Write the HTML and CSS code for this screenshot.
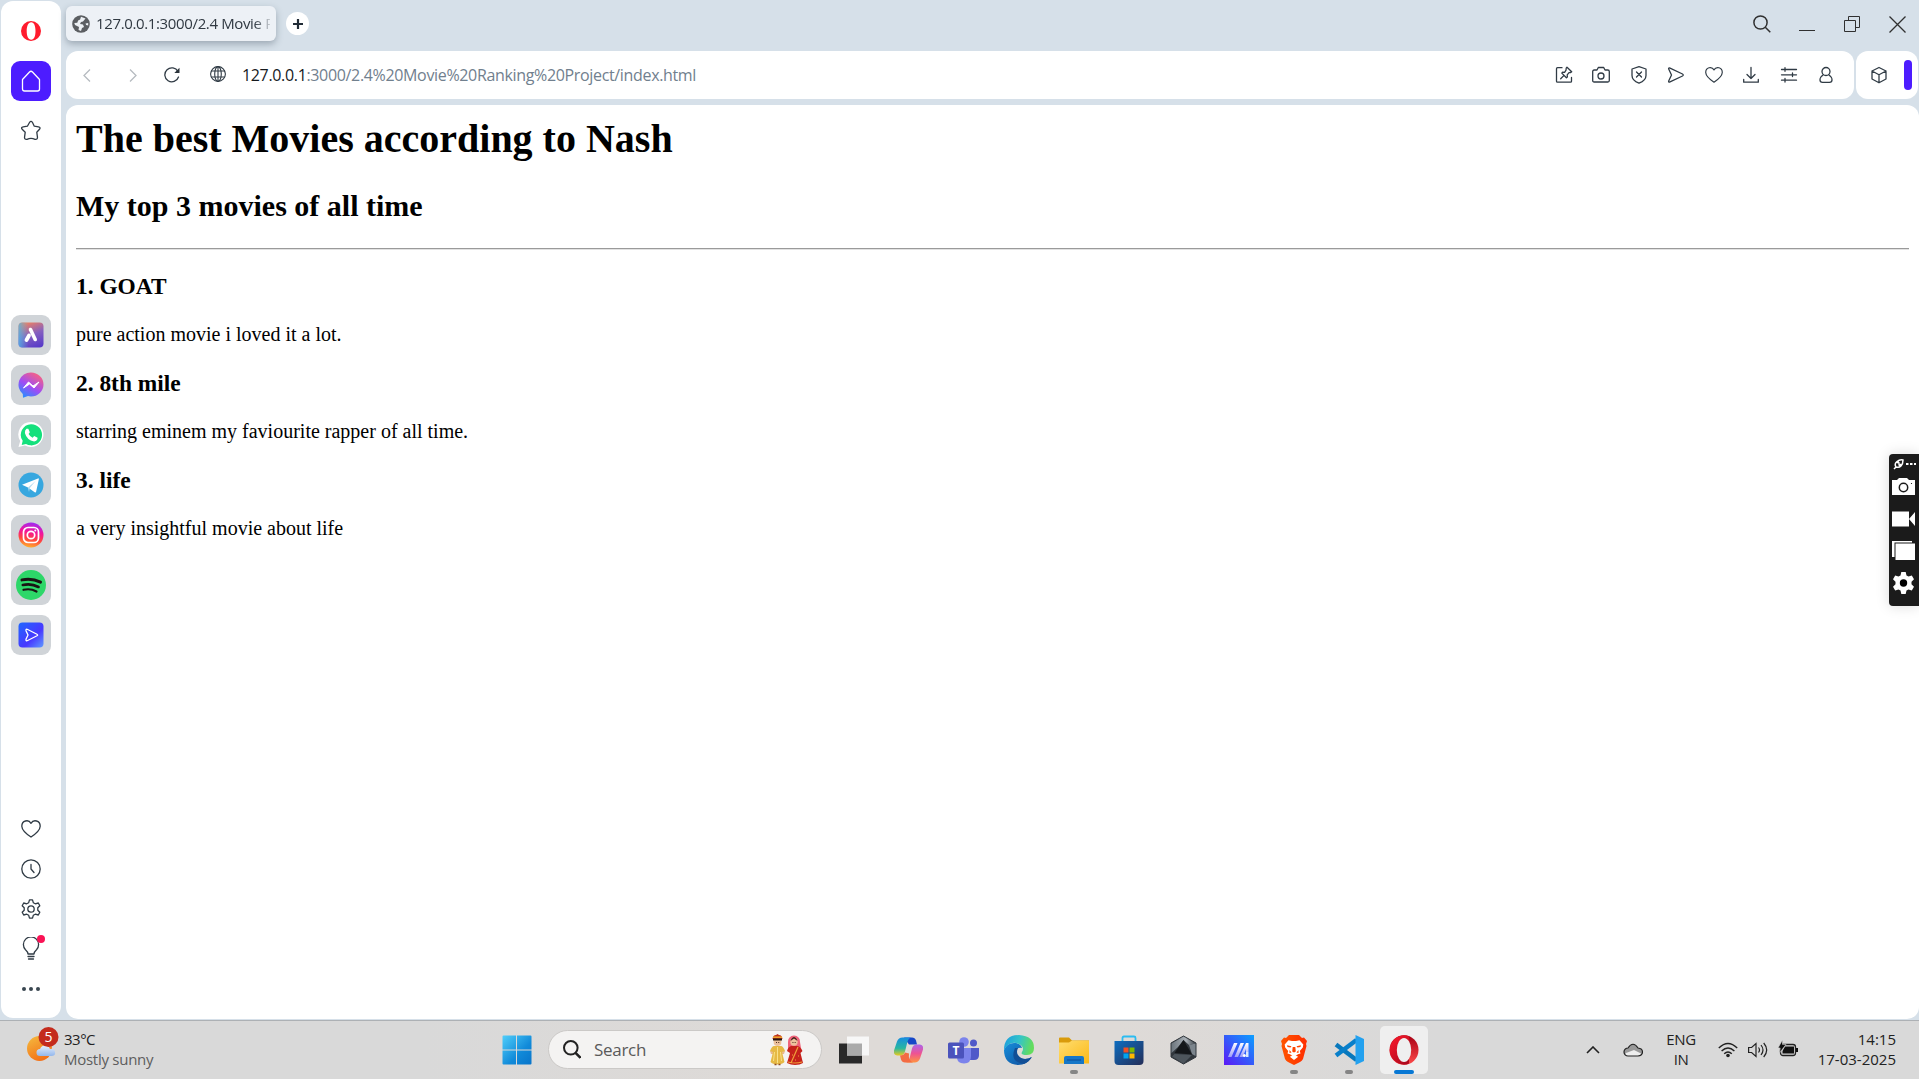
FILE: index.html
```html
<!DOCTYPE html>
<html lang="en">
<head>
<meta charset="utf-8">
<title>Movie Ranking Project</title>
<link rel="stylesheet" href="styles.css">
</head>
<body>
<div class="browser">
  <nav class="sidebar">
    <div class="slot"><svg width="20" height="20" viewBox="0 0 20 20"><path fill="#ff1b2d" fill-rule="evenodd" d="M10 0a10 10 0 1 0 0 20a10 10 0 0 0 0-20zM10.200 1.200c3 0 4.300 4 4.300 8.800s-1.300 8.800-4.300 8.800S5.700 14.800 5.700 10s1.500-8.800 4.500-8.800z"/></svg></div>
    <div class="slot home"><svg class="ln" width="20" height="22" viewBox="0 0 20 22"><path d="M1.500 9.500 8.500 2q1.500-1.500 3 0l7 7.500v9.500q0 2-2 2h-13q-2 0-2-2z"/></svg></div>
    <div class="slot"><svg class="ln" width="22" height="22" viewBox="0 0 22 22"><path d="M9.500 2.500q1.500-2.200 3 0l1.800 3.700 4.200.6q2.500.5 1 2.500l-2.700 3 .7 5q0 2.500-2.500 2-4-1.800-8 0-2.500.5-2.500-2l.7-5-3-3q-1.700-2 1-2.500l4.200-.6z"/></svg></div>
    <div class="apps">
      <div class="tile"><svg width="26" height="26" viewBox="0 0 26 26"><defs><linearGradient id="ar" x1=".3" y1="0" x2=".7" y2="1"><stop offset="0" stop-color="#f08060"/><stop offset=".5" stop-color="#8560c0"/><stop offset="1" stop-color="#5a3cc8"/></linearGradient><linearGradient id="ar2"><stop offset="0" stop-color="#4fb8e8" stop-opacity=".8"/><stop offset=".4" stop-color="#4fb8e8" stop-opacity="0"/></linearGradient></defs><rect x=".5" y=".5" width="25" height="25" rx="4" fill="url(#ar)"/><rect x=".5" y=".5" width="25" height="25" rx="4" fill="url(#ar2)"/><path d="M11 13.500 8.500 18" stroke="#fff" stroke-width="3.800" stroke-linecap="round"/><path d="m12.500 7.500 4.700 10" stroke="#fff" stroke-width="3.600" stroke-linecap="round"/></svg></div>
      <div class="tile"><svg width="26" height="26" viewBox="0 0 26 26"><defs><linearGradient id="ms" x1=".2" y1="1" x2=".8" y2="0"><stop offset="0" stop-color="#2390ff"/><stop offset=".45" stop-color="#a04cf5"/><stop offset="1" stop-color="#ff6378"/></linearGradient></defs><path fill="url(#ms)" d="M13 .5a12.500 12 0 0 1 0 24q-2 0-3-.4l-5 1.700-.2-3.800A12.200 12.200 0 0 1 13 .5z"/><path d="m5.500 16 5-6 4.500 4 6-4-5 6-4.500-4z" fill="#fff" stroke="#fff" stroke-linejoin="round"/></svg></div>
      <div class="tile"><svg width="26" height="26" viewBox="0 0 26 26"><path fill="#fff" d="M13 0a12.500 12.500 0 1 1-6 23.500L.5 25l1.700-6A12.500 12.500 0 0 1 13 0z"/><path fill="#14e07c" d="M13 2.200a10.600 10.600 0 1 1-5 19.700L3.700 22.900l1-4.100A10.600 10.600 0 0 1 13 2.200z"/><path fill="#fff" d="M8.500 6.800h1.800l1.500 3.400-1.200 1.900q1.300 2.500 4 3.600l1.600-1.700 3.400 1.700q0 3.400-3.500 3.700Q8.800 18.200 6.900 11q-.2-2.600 1.600-4.200z"/></svg></div>
      <div class="tile"><svg width="26" height="26" viewBox="0 0 26 26"><circle cx="13" cy="13" r="12.500" fill="#37a7df"/><path fill="#fff" d="m4 12.800 16-6.400q1-.2.8 1l-2.700 12.400q-.3 1-1.400.4L10 15.500z"/><path d="m10 15.500 7.800-6.700-6 7.200-.8 4z" fill="#b6dcef"/></svg></div>
      <div class="tile"><svg width="26" height="26" viewBox="0 0 26 26"><defs><linearGradient id="ig" x1=".3" y1="1" x2=".5" y2="0"><stop offset="0" stop-color="#ffb62b"/><stop offset=".35" stop-color="#ff453f"/><stop offset=".65" stop-color="#f3149c"/><stop offset="1" stop-color="#a02cf0"/></linearGradient></defs><circle cx="13" cy="13" r="12.500" fill="url(#ig)"/><g fill="none" stroke="#fff" stroke-width="1.700"><rect x="5.500" y="5.500" width="15" height="15" rx="4.500"/><circle cx="13" cy="13" r="3.700"/></g><circle cx="17.300" cy="8.600" r="1" fill="#fff"/></svg></div>
      <div class="tile"><svg width="30" height="30" viewBox="0 0 30 30"><circle cx="15" cy="15" r="15" fill="#2dd769"/><g fill="none" stroke="#191414" stroke-linecap="round"><path stroke-width="3" d="M6 9.900q10-2 18.500 2.200"/><path stroke-width="2.600" d="M6.800 15q8.500-2 15.700 2"/><path stroke-width="2.200" d="M7.500 19.800q7-1.700 13 1.700"/></g></svg></div>
      <div class="tile"><svg width="26" height="26" viewBox="0 0 26 26"><defs><linearGradient id="pl" x1="0" y1="0" x2="1" y2="1"><stop offset="0" stop-color="#2068ff"/><stop offset=".6" stop-color="#4838ff"/><stop offset="1" stop-color="#609cff"/></linearGradient></defs><rect x=".5" y=".5" width="25" height="25" rx="4" fill="url(#pl)"/><path d="M8 8.700q-.3-2 1.700-1.200l9.300 4.700q1.300.8 0 1.600l-9.300 4.700q-2 .8-1.700-1.200L10 13z" fill="none" stroke="#fff" stroke-width="1.300"/></svg></div>
    </div>
    <div class="tools">
      <div class="slot"><svg class="ln" width="20" height="18" viewBox="0 0 20 18"><path d="M10 17Q1 11 .8 6.200C.8.500 7.500-1 10 3.300 12.500-1 19.200.500 19.200 6.200 19 11 10 17 10 17z"/></svg></div>
      <div class="slot"><svg class="ln" width="20" height="20" viewBox="0 0 20 20"><circle cx="10" cy="10" r="9.200"/><path d="M10 5.500V10l3 3.500"/></svg></div>
      <div class="slot"><svg class="ln" width="20" height="20" viewBox="0 0 20 20"><circle cx="10" cy="10" r="3.200"/><path d="M8.500.8h3l.8 2.900 2 1.100 3-.8 1.500 2.700-2 2v2.600l2 2-1.500 2.700-3-.8-2 1.100-.8 2.900h-3l-.8-2.900-2-1.100-3 .8-1.500-2.700 2-2V8.700l-2-2L2.700 4l3 .8 2-1.100z"/></svg></div>
      <div class="slot badge"><svg class="ln" width="18" height="24" viewBox="0 0 18 24"><path d="M6 17q0-2-2.500-4.200a7.600 7.600 0 1 1 11 0Q12 15 12 17zM6 19.500h6M6.500 22h5"/></svg></div>
      <div class="slot"><svg width="20" height="6" viewBox="0 0 20 6"><g fill="#394650"><circle cx="3" cy="3" r="2"/><circle cx="10" cy="3" r="2"/><circle cx="17" cy="3" r="2"/></g></svg></div>
    </div>
  </nav>
  <main class="main">
    <header class="tabs">
      <div class="tab"><svg width="18" height="18" viewBox="0 0 18 18"><circle cx="9" cy="9" r="8.800" fill="#5b5e62"/><path fill="#edf1f5" d="m9 1.800 4.500 1.700-2.500 3-2 .5-1 2 3 .5 1 2.500-2 1-1 3-2.500-1 .5-3-4-2-.7-2 3-.3.800-2.200 2-1z M13.500 8.500l2.700-.5v2.500l-2-.5z"/></svg><span class="title">127.0.0.1:3000/2.4 Movie R</span></div>
      <div class="newtab"><svg width="10" height="10" viewBox="0 0 10 10"><path d="M5 0v10M0 5h10" stroke="#202a35" stroke-width="2.200"/></svg></div>
      <div class="controls">
        <svg width="18" height="18" viewBox="0 0 18 18"><circle cx="7.500" cy="7.500" r="6.600"/><path d="m12.300 12.300 5 5"/></svg>
        <svg width="16" height="16" viewBox="0 0 16 16"><path d="M0 14.500h16" stroke-width="1"/></svg>
        <svg width="16" height="16" viewBox="0 0 16 16"><path stroke-width="1" d="M.5 4.500h11v11H.5zM4.500 4.500v-4h11v11h-4"/></svg>
        <svg width="17" height="17" viewBox="0 0 17 17"><path d="m.5.500 16 16M16.500.500l-16 16" stroke-width="1.300"/></svg>
      </div>
    </header>
    <div class="bars">
      <div class="toolbar">
        <svg class="back" width="8" height="13" viewBox="0 0 8 13"><path d="m7 .5-6 6 6 6"/></svg>
        <svg class="fwd" width="8" height="13" viewBox="0 0 8 13"><path d="m1 .5 6 6-6 6"/></svg>
        <svg class="ln reload" width="16" height="16" viewBox="0 0 16 16"><path d="M14 4.500A7 7 0 1 0 14.500 10"/><path d="M15.500.8V6h-5.200z" fill="#2b333b" stroke="none"/></svg>
        <svg class="ln globe" width="16" height="16" viewBox="0 0 16 16"><circle cx="8" cy="8" r="7.400"/><ellipse cx="8" cy="8" rx="3.300" ry="7.400"/><path d="M8 .6v14.800M1.500 5h13M1.500 11h13"/></svg>
        <div class="url"><b>127.0.0.1</b>:3000/2.4%20Movie%20Ranking%20Project/index.html</div>
        <div class="actions">
          <svg class="ln" width="18" height="18" viewBox="0 0 18 18"><path d="M7 1.700H2.500Q1.500 1.700 1.500 2.700v12.500q0 1 1 1h13q1 0 1-1V11.500M12 1.200l4.700 4.500-1 .8-1.700.2-1.800 2.200.2 2-1 .8-4.600-4.600.8-1 2 .2L11 4.200l.2-2zM9 9.400l-3.300 3.300"/></svg>
          <svg class="ln" width="18" height="18" viewBox="0 0 18 18"><path d="M.7 5.500Q.7 4 2.200 4H5l1.300-2.500h5.400L13 4h2.800q1.500 0 1.500 1.500v9q0 1.500-1.500 1.500H2.200Q.7 16 .7 14.500z"/><circle cx="9" cy="10" r="3"/></svg>
          <svg class="ln" width="18" height="18" viewBox="0 0 18 18"><path d="m9 .7 7 2.300v6.500q0 5-7 7.700-7-2.700-7-7.700V3zM6.500 6l5 5M11.500 6l-5 5"/></svg>
          <svg class="ln" width="18" height="18" viewBox="0 0 18 18"><path d="M2.500 1.800 15.500 8q1.500 1 0 2L2.500 16.200q-1.200 0-.8-1.200L4.500 9 1.700 3q-.4-1.200.8-1.200z"/></svg>
          <svg class="ln" width="18" height="18" viewBox="0 0 20 18"><path d="M10 17Q1 11 .8 6.200C.8.500 7.500-1 10 3.300 12.500-1 19.200.500 19.200 6.200 19 11 10 17 10 17z"/></svg>
          <svg class="ln" width="18" height="18" viewBox="0 0 18 18"><path d="M9 1.500v11M5 8.500l4 4 4-4M1.700 13.500v2.700h14.600v-2.700"/></svg>
          <svg class="ln" width="18" height="18" viewBox="0 0 18 18"><path d="M1.500 3.500h15M1.500 8.800h15M1.500 14.200h15M5 1.700v3.600M12.500 7v3.600M5 12.400V16"/></svg>
          <svg class="ln" width="18" height="18" viewBox="0 0 18 18"><circle cx="9" cy="5.500" r="4"/><path d="M6 9Q3 11 3 14q0 2.300 2.500 2.300h7Q15 16.300 15 14q0-3-3-5"/></svg>
        </div>
      </div>
      <div class="panel">
        <svg class="ln" width="16" height="18" viewBox="0 0 16 18"><path d="m8 1.500 7 3.500v8L8 16.800 1 13V5zM1 5l7 3.700L15 5M8 8.700v8"/></svg>
        <span class="handle"></span>
      </div>
    </div>
    <article class="page">
      <h1>The best Movies according to Nash</h1>
      <h2>My top 3 movies of all time</h2>
      <hr>
      <h3>1. GOAT</h3>
      <p>pure action movie i loved it a lot.</p>
      <h3>2. 8th mile</h3>
      <p>starring eminem my faviourite rapper of all time.</p>
      <h3>3. life</h3>
      <p>a very insightful movie about life</p>
    </article>
  </main>
  <aside class="recorder">
    <svg width="30" height="152" viewBox="0 0 30 152"><g fill="#fff"><path d="M3 26h23v15H3zM3 57.500h17v15H3zM20 65l6-7v14z"/><path d="M3 26h5l2-2h8l2 2h6v3H3z"/></g><circle cx="14.500" cy="33.500" r="4.200" fill="#fff" stroke="#1b1b1b" stroke-width="1.500"/><circle cx="22.500" cy="29.500" r=".6"/><path fill="#fff" d="M3 87h20v1.500H5.500V103H3zM6.500 89.500H26V106H6.500z"/><g fill="none" stroke="#fff" stroke-width="1.500"><path d="M7 13q-2-3 1-5.500T14 6q0 4-2 6t-5 1zM5 15l2-2M8 9q2-2 2 1t2 0"/><path stroke-width="2" stroke-dasharray="2.500 1.500" d="M17 10h10"/></g><path fill="#fff" d="M12.300 118h4.400l.8 3.500 2 1 3.300-1 2.200 3.800-2.500 2.500v2.400l2.500 2.500-2.200 3.800-3.300-1-2 1-.8 3.500h-4.400l-.8-3.500-2-1-3.300 1L4 132.700l2.500-2.500v-2.400L4 125.300l2.200-3.800 3.300 1 2-1z"/><circle cx="14.500" cy="129" r="3.700"/></svg>
  </aside>
</div>
<footer class="taskbar">
  <div class="weather">
    <svg width="32" height="35" viewBox="0 0 32 35"><defs><linearGradient id="sun" x1=".2" y1="0" x2=".7" y2="1"><stop offset="0" stop-color="#f4b63c"/><stop offset="1" stop-color="#f36c16"/></linearGradient><linearGradient id="cl" x1="0" y1="0" x2="0" y2="1"><stop offset="0" stop-color="#e6f0fc"/><stop offset="1" stop-color="#93b7ec"/></linearGradient></defs><circle cx="12.500" cy="21.500" r="12.500" fill="url(#sun)"/><path fill="url(#cl)" d="M13 29a3.500 3.500 0 0 1 0-7q2-5 7-3 2 0 3 3 4-1 5 3t-4 4z"/><circle cx="21.500" cy="10" r="10" fill="#c42b1c"/><text x="21.500" y="15" class="num">5</text></svg>
    <div><div class="temp">33°C</div><div class="sky">Mostly sunny</div></div>
  </div>
  <div class="launch">
    <div class="app"><svg width="30" height="30" viewBox="0 0 30 30"><defs><linearGradient id="win" gradientUnits="userSpaceOnUse" x1="0" y1="0" x2="30" y2="30"><stop offset="0" stop-color="#52d0fb"/><stop offset=".6" stop-color="#118ad9"/><stop offset="1" stop-color="#0873c9"/></linearGradient></defs><path fill="url(#win)" d="M.5 1.500q0-1 1-1H14v14H.5zM15 .5h13.500q1 0 1 1v13H15zM.5 15.500H14v14H1.500q-1 0-1-1zM15 15.500h14.500v13q0 1-1 1H15z"/></svg></div>
    <div class="search">
      <svg width="18" height="19" viewBox="0 0 18 19"><g fill="none" stroke="#222" stroke-width="2"><circle cx="7.800" cy="7.800" r="6.800"/><path stroke-width="2.500" d="m12.500 12.800 5 5"/></g></svg>
      <span>Search</span>
      <svg width="34" height="32" viewBox="0 0 34 32"><path fill="#e9b993" d="M1 17h3v3H2zM13 17h3l-1 3h-2z"/><path fill="#e6b945" d="M5 12h7q2 0 4 5l-3 1-.5-2 3 12q-2 2-7 2.500-5-.5-7-2.500l3-12-.5 2-3-1q2-5 4-5z"/><path d="M8.500 13v16M5.500 18l-1 9M11.500 18l1 9" stroke="#f9e08a"/><path d="M5.500 30.500h2M9.500 30.500h2" stroke="#8d4a24" stroke-width="1.500"/><circle cx="8.500" cy="8" r="3.900" fill="#edc19c"/><path fill="#bd3220" d="M3.500 5Q4 1 7 1l1.500-1L10 1q3 0 3.500 4z"/><path stroke="#f1a02a" stroke-width="1.600" d="M4 3.200h9"/><path fill="#26180f" d="M4 4.500h9v2H4z"/><path d="M7 8.500h.9M9.300 8.500h.9" stroke="#3b2115"/><path fill="#ef647b" d="M19 16V8q0-6 6-6.500Q31 2 31 8l1.500 9-5 3-6-4z"/><circle cx="25" cy="8" r="3.700" fill="#edc19c"/><path fill="#43201a" d="M21.500 7q1-3.500 3.500-4 2.500.5 3.500 4L25 4.500z"/><path d="M23.500 8.500h.9M25.700 8.500h.9" stroke="#3b2115"/><path fill="#c5211b" d="M22 12h6q3 0 5.500 5l-2 2 2.500 10q-3 2-8 2-4 0-8-2l3-10-3-2q1-4 4-5z"/><path d="m29 13-7 16M19 28q7 2 14 0M23 21h1M29 22h1M26 26h1" fill="none" stroke="#f0a13a" stroke-width="1.200"/></svg>
    </div>
    <div class="app"><svg width="30" height="28" viewBox="0 0 30 28"><path fill="#292929" d="M0 7.500h23v20H0z"/><path fill="#f7f7f7" d="M8 .500h22v19H8z"/><path fill="#aaa" d="M8 7.500h15v12H8z"/></svg></div>
    <div class="app"><svg width="29" height="26" viewBox="0 0 29 26"><defs><linearGradient id="ca" x1="0" y1="0" x2="0" y2="1"><stop offset="0" stop-color="#168de0"/><stop offset=".6" stop-color="#28b7a0"/><stop offset="1" stop-color="#e9c91e"/></linearGradient><linearGradient id="cb" x1="0" y1="0" x2="0" y2="1"><stop offset="0" stop-color="#ad65ea"/><stop offset=".5" stop-color="#ee5393"/><stop offset="1" stop-color="#ff9340"/></linearGradient></defs><path fill="#1747c8" d="M10 .5h8q3 0 4 3l1 4h-8z"/><path fill="url(#ca)" d="M8.500.5H17q-3 1-4 6l-2 8q-1 4-5 4H3q-4-1-3-5l3-9q1.500-4 5.500-4z"/><path fill="url(#cb)" d="M20.500 25.500H12q3-1 4-6l2-8q1-4 5-4h3q4 1 3 5l-3 9q-1.500 4-5.500 4z"/><path fill="#f36b43" d="M19 25.500h-8q-3 0-4-3l-1-4q4 0 5-3l4 1q-1 7 4 9z"/></svg></div>
    <div class="app"><svg width="31" height="27" viewBox="0 0 31 27"><circle cx="16" cy="5" r="4.800" fill="#7b83eb"/><circle cx="25.500" cy="6" r="3.500" fill="#5059c9"/><path fill="#5059c9" d="M21 11h10v7q0 5-5 5h-5z"/><path fill="#7b83eb" d="M9 11h14v8q0 7.500-7 7.500T9 20z"/><rect y="5.500" width="16" height="16" rx="1.500" fill="#4b53bc"/><text x="8" y="18" class="tee">T</text></svg></div>
    <div class="app"><svg width="30" height="30" viewBox="0 0 30 30"><defs><linearGradient id="ea" x1="0" y1="0" x2="1" y2=".2"><stop offset="0" stop-color="#1a9be0"/><stop offset=".55" stop-color="#34c4c8"/><stop offset="1" stop-color="#63dc5e"/></linearGradient><linearGradient id="eb" x1="0" y1="0" x2="1" y2="1"><stop offset="0" stop-color="#168edb"/><stop offset="1" stop-color="#104d9b"/></linearGradient></defs><path fill="url(#eb)" d="M0 15Q3 7 12 8q5 1 6 5-5-1-6 3 0 8 9 8 4 0 6.500-2Q23 30 14 30 0 29 0 15z"/><path fill="#124f96" d="M11 13q-6 14 9 16 5-2 8-7-9 5-14-2-2-3 0-7z"/><path fill="url(#ea)" d="M0 15Q0 0 15 0q15 1 15 13 0 7-7 7-7 0-5-3 3-5-3-8-9-4-15 6z"/></svg></div>
    <div class="app run"><svg width="30" height="27" viewBox="0 0 30 27"><defs><linearGradient id="fo" x1="0" y1="0" x2="1" y2="1"><stop offset="0" stop-color="#ffdd70"/><stop offset="1" stop-color="#fbb916"/></linearGradient></defs><path fill="#d99b0b" d="M0 1.500Q0 .5 1 .5h9l3 3h17v7H0z"/><path fill="url(#fo)" d="M0 5.500h10l3-2h16q1 0 1 1v22H0z"/><path fill="#1677c8" d="M5 27v-6q0-2 2-2h16q2 0 2 2v6z"/><path stroke="#0b4d96" d="M8 23h14"/></svg></div>
    <div class="app"><svg width="30" height="30" viewBox="0 0 30 30"><defs><linearGradient id="st" x1="0" y1="0" x2="1" y2="1"><stop offset="0" stop-color="#0d6dc0"/><stop offset="1" stop-color="#252e58"/></linearGradient></defs><path d="M8.500 7V3q0-1.500 1.500-1.500h10q1.500 0 1.500 1.500v4" fill="none" stroke="#2bbcf1" stroke-width="1.800"/><path fill="url(#st)" d="M.5 6h29v20q0 4-4 4h-21q-4 0-4-4z"/><path fill="#f25022" d="M9.500 12.500h5v5h-5z"/><path fill="#7fba00" d="M15.500 12.500h5v5h-5z"/><path fill="#00a4ef" d="M9.500 18.500h5v5h-5z"/><path fill="#ffb900" d="M15.500 18.500h5v5h-5z"/></svg></div>
    <div class="app"><svg width="27" height="30" viewBox="0 0 27 30"><defs><linearGradient id="hx" x1="0" y1="0" x2="1" y2="0"><stop offset="0" stop-color="#6c757d"/><stop offset=".6" stop-color="#aab1b7"/><stop offset="1" stop-color="#3c434a"/></linearGradient></defs><path fill="#30363c" stroke="#30363c" stroke-linejoin="round" d="m13.500 1 12.500 7v14l-12.500 7L1 22V8z"/><path fill="url(#hx)" d="m13.500 1.500 12 7L19 10l-5.500-5L8 12l-6.500 6V8.500z"/><path fill="#7c858d" d="m19 10 6.500-1.500V21L22 19z"/><path fill="#14171a" d="M13.500 5 22 19.500 4.500 18z"/><path fill="#4d555c" d="m4.500 19 17.500 1-8.500 8.500L2 21.500z"/></svg></div>
    <div class="app"><svg width="30" height="30" viewBox="0 0 30 30"><defs><linearGradient id="ma" x1="0" y1="1" x2="1" y2="0"><stop offset="0" stop-color="#5c18f5"/><stop offset="1" stop-color="#0b9fff"/></linearGradient><linearGradient id="mb" x1="0" y1="1" x2="0" y2="0"><stop offset="0" stop-color="#9d9cf8"/><stop offset="1" stop-color="#fff"/></linearGradient></defs><path fill="url(#ma)" d="M0 0h30v30H0z"/><path fill="url(#mb)" d="M4 22 10 8h3.500l-6 14zM10.500 22l6-14H20l-6 14zM15.500 22 22 8h2.500v9H22v-3l-3.200 8z"/><circle cx="20.300" cy="20.500" r="1.500" fill="#fff"/><path fill="#d9e8ff" d="M22 17h2.500v5H22z"/></svg></div>
    <div class="app run"><svg width="26" height="30" viewBox="0 0 26 30"><defs><linearGradient id="br"><stop offset="0" stop-color="#ff5500"/><stop offset="1" stop-color="#ff2d00"/></linearGradient></defs><path fill="url(#br)" d="M8 0h10l3 3 2-.5L26 6l-1 3 .5 2L22 24q-1 2-3 3l-6 3-6-3q-2-1-3-3L.5 11 1 9 0 6l3-3.500L5 3z"/><path fill="#fff" d="m7.500 5.300 3.500.7h4l3.500-.7L22.300 9.500l-.5 3-3 3.500.7 2.500-2.500.7-2.500 1.800h-3L9 19.200l-2.500-.7.7-2.500-3-3.500-.5-3z"/><path fill="#ff4400" d="m6 10.300 4.500 1-1 1.200L6.500 12zM20 10.300l-4.500 1 1 1.200 3-.5zM11.700 12h2.600l.5 4.500L13 17.500l-1.800-1zM8.500 15l2 2.500-2 .5zM17.500 15l-2 2.500 2 .5z"/><path fill="#fff" d="m8.800 21.800 4.200-2 4.200 2L13 25z"/></svg></div>
    <div class="app run"><svg width="30" height="30" viewBox="0 0 30 30"><path fill="none" stroke="#0878bc" stroke-width="4.500" stroke-linejoin="round" d="M2 9.500 22.500 25"/><path fill="none" stroke="#087fca" stroke-width="4.500" d="M2 20.500 22.500 5"/><path fill="#23a1ef" d="M21.500 0 30 4v22l-8.500 4z"/></svg></div>
    <div class="app active"><svg width="30" height="30" viewBox="0 0 30 30"><defs><linearGradient id="op" x1="0" y1="0" x2=".7" y2="1"><stop offset="0" stop-color="#ff1b2d"/><stop offset="1" stop-color="#b00a1e"/></linearGradient><linearGradient id="oq" x1="0" y1="0" x2="0" y2="1"><stop offset="0" stop-color="#a70014"/><stop offset="1" stop-color="#ff4b4b"/></linearGradient></defs><ellipse cx="15" cy="15" rx="14.500" ry="14.700" fill="url(#oq)"/><path fill="url(#op)" d="M20 1.500Q17-.3 13 .5A14.700 14.700 0 0 0 15 29.700q3 0 5-1.200z"/><ellipse cx="15" cy="15" rx="7.200" ry="12" fill="#efefef"/></svg></div>
  </div>
  <div class="tray">
    <svg class="chev" width="14" height="8" viewBox="0 0 14 8"><path d="m1 7 6-6 6 6" fill="none" stroke="#222" stroke-width="1.600"/></svg>
    <svg class="cloud" width="20" height="14" viewBox="0 0 20 14"><path fill="#999" d="M5 13a4 4 0 0 1 0-8q5-7.500 10 0 4.500.5 4.500 4T15 13z"/><path fill="#eee" d="M4 13q-3-1-1-3l8-3 8 4-3 2z"/><path fill="none" stroke="#222" stroke-width="1.200" d="M5 13a4 4 0 0 1 0-8q5-7.500 10 0 4.500.5 4.500 4T15 13z"/></svg>
    <div class="lang">ENG<br>IN</div>
    <svg class="net" width="20" height="16" viewBox="0 0 20 16"><g fill="none" stroke="#222" stroke-width="1.400"><path d="M.8 6q9.200-9 18.400 0M3.600 9q6.400-6 12.800 0M6.200 11.800q3.800-3.500 7.600 0"/></g><circle cx="10" cy="13.500" r="1.800" fill="#222"/></svg>
    <svg class="vol" width="20" height="16" viewBox="0 0 20 16"><path fill="none" stroke="#222" stroke-width="1.200" d="M.6 5.500h3L8 1.500v13l-4.400-4h-3zM10.500 5.500q2 2.500 0 5M13 3q4 5 0 10M15.700 1q6 7 0 14"/></svg>
    <svg class="bat" width="20" height="17" viewBox="0 0 20 17"><rect x="2.500" y="4.500" width="15" height="11" rx="2.500" fill="none" stroke="#222" stroke-width="1.300"/><path fill="#111" d="M7 6.500h9v7H4.500V11zM18 8h2v4h-2z"/><path fill="#111" stroke="#d9d9d9" stroke-width=".6" d="M4.500 0v4.500H8L1.500 13l.7-5H0z"/></svg>
    <div class="clock">14:15<br>17-03-2025</div>
  </div>
</footer>
</body>
</html>
```

FILE: styles.css
```css
* { box-sizing: border-box; }
body { margin: 0; height: 1079px; overflow: hidden; background: #d6e0e9; font-family: "Open Sans", "Noto Sans", sans-serif; color: #222; display: flex; flex-direction: column; }
svg { display: block; flex: none; }
.ln { fill: none; stroke: #303b45; stroke-width: 1.3; stroke-linejoin: round; stroke-linecap: round; }

.browser { height: 1020px; display: flex; position: relative; }
.sidebar { width: 60px; height: 1017px; margin: 1px 5px 0 1px; padding-top: 10px; background: #fff; border-radius: 12px; display: flex; flex-direction: column; align-items: center; gap: 10px; }
.slot, .tile { width: 40px; height: 40px; flex: none; display: flex; align-items: center; justify-content: center; }
.home { background: #4d1cff; border-radius: 9px; }
.home .ln { stroke: #fff; }
.apps { margin-top: 154px; display: flex; flex-direction: column; gap: 10px; }
.tile { background: #d0d4d8; border-radius: 9px; }
.tools { margin-top: 144px; display: flex; flex-direction: column; }
.badge { position: relative; }
.badge::after { content: ""; position: absolute; left: 26px; top: 6px; width: 8px; height: 8px; border-radius: 50%; background: #fa1355; }

.main { flex: 1; min-width: 0; display: flex; flex-direction: column; }
.tabs { height: 51px; padding-top: 6px; display: flex; align-items: flex-start; }
.tab { width: 210px; height: 35px; padding: 0 5px 0 6px; background: #edf1f6; border-radius: 6px; box-shadow: 0 3px 7px rgba(70, 85, 100, .4); display: flex; align-items: center; gap: 6px; }
.title { width: 174px; padding-bottom: 2px; white-space: nowrap; overflow: hidden; font-size: 15px; letter-spacing: -.36px; color: #303942; -webkit-mask-image: linear-gradient(90deg, #000 158px, transparent 178px); mask-image: linear-gradient(90deg, #000 158px, transparent 178px); }
.newtab { width: 23px; height: 23px; margin: 6px 0 0 10px; background: #fff; border-radius: 50%; display: flex; align-items: center; justify-content: center; }
.controls { margin: 9px 13px 0 auto; display: flex; align-items: center; gap: 29px; }
.controls svg { fill: none; stroke: #303030; stroke-width: 1.5; }
.controls svg:nth-child(1) { margin-right: -1px; }

.bars { height: 48px; display: flex; gap: 2px; }
.toolbar { width: 1788px; background: #fff; border-radius: 12px; display: flex; align-items: center; }
.back, .fwd { fill: none; stroke: #b6bbc0; stroke-width: 1.3; }
.back { margin-left: 17px; }
.fwd { margin-left: 38px; }
.reload { margin-left: 27px; }
.globe { margin: 0 16px 2px 30px; stroke-width: 1.1; }
.url { font-size: 16px; line-height: 22px; white-space: nowrap; color: #71808e; letter-spacing: -.34px; }
.url b { font-weight: 400; color: #15191d; }
.actions { margin: 0 19px 0 auto; display: flex; gap: 19.5px; }
.panel { width: 62px; background: #fff; border-radius: 12px; display: flex; align-items: center; padding-left: 15px; }
.handle { width: 8px; height: 30px; margin: 0 0 0 17px; border-radius: 4px; background: #4d1cff; }

.page { height: 914px; margin-top: 6px; padding: 10px 10px 0; background: #fff; border-radius: 12px; font: 20px/normal "Liberation Serif", serif; color: #000; }
.page h1 { margin: 0 0 26.8px; font-size: 40px; }
.page h2 { margin: 0; font-size: 30px; }
.page hr { height: 2px; margin: 24.9px 0 0; border: 0; border-top: 1px solid #9a9a9a; border-bottom: 1px solid #e2e2e2; }
.page h3 { margin: 23.4px 0; font-size: 23.4px; }
.page p { margin: 0; }

.recorder { position: absolute; right: 0; top: 454px; width: 30px; height: 152px; background: #1b1b1b; border-radius: 4px 0 0 4px; box-shadow: 0 0 14px rgba(0, 0, 0, .15); }

.taskbar { height: 59px; border-top: 1px solid #adb1b5; background: linear-gradient(90deg, #d9d9d9 22%, #dedad7 42%, #dedad7 58%, #d9d9d9 75%); display: flex; font-size: 15px; line-height: 20px; }
.weather { width: 489px; padding: 6px 0 0 27px; display: flex; gap: 5px; }
.weather > div { padding-top: 2px; }
.num { fill: #fff; font-size: 14px; text-anchor: middle; }
.tee { fill: #fff; font-size: 12px; font-weight: 700; text-anchor: middle; }
.temp { letter-spacing: -.5px; }
.sky { color: #5d5d5d; letter-spacing: -.27px; }
.launch { display: flex; }
.app { width: 55px; height: 58px; display: flex; align-items: center; justify-content: center; position: relative; }
.app svg { position: relative; }
.search { width: 274px; height: 39px; margin: 9px 4px 0; padding: 0 18px 0 14px; border: 1px solid #cbc9c7; border-radius: 20px; background: #f4f3f2; display: flex; align-items: center; color: #5a5a5a; font-size: 17px; letter-spacing: -.3px; }
.search span { margin: 0 auto 0 13px; }
.run::after, .active::after { content: ""; position: absolute; left: 24px; bottom: 5px; width: 8px; height: 4px; border-radius: 2px; background: #858585; }
.active::before { content: ""; position: absolute; left: 4px; top: 5px; width: 48px; height: 48px; border-radius: 5px; background: #efefef; }
.active::after { left: 18px; width: 20px; background: #0878d4; }
.tray { flex: 1; display: flex; align-items: center; white-space: nowrap; }
.chev { margin-left: 155px; }
.cloud { margin-left: 23px; }
.lang { width: 40px; margin-left: 18px; padding-bottom: 3px; text-align: center; letter-spacing: -.4px; }
.net { margin-left: 17px; }
.vol, .bat { margin-left: 10px; }
.bat { margin-bottom: 3px; }
.clock { margin: 0 23px 3px auto; text-align: right; letter-spacing: 0; }
```
